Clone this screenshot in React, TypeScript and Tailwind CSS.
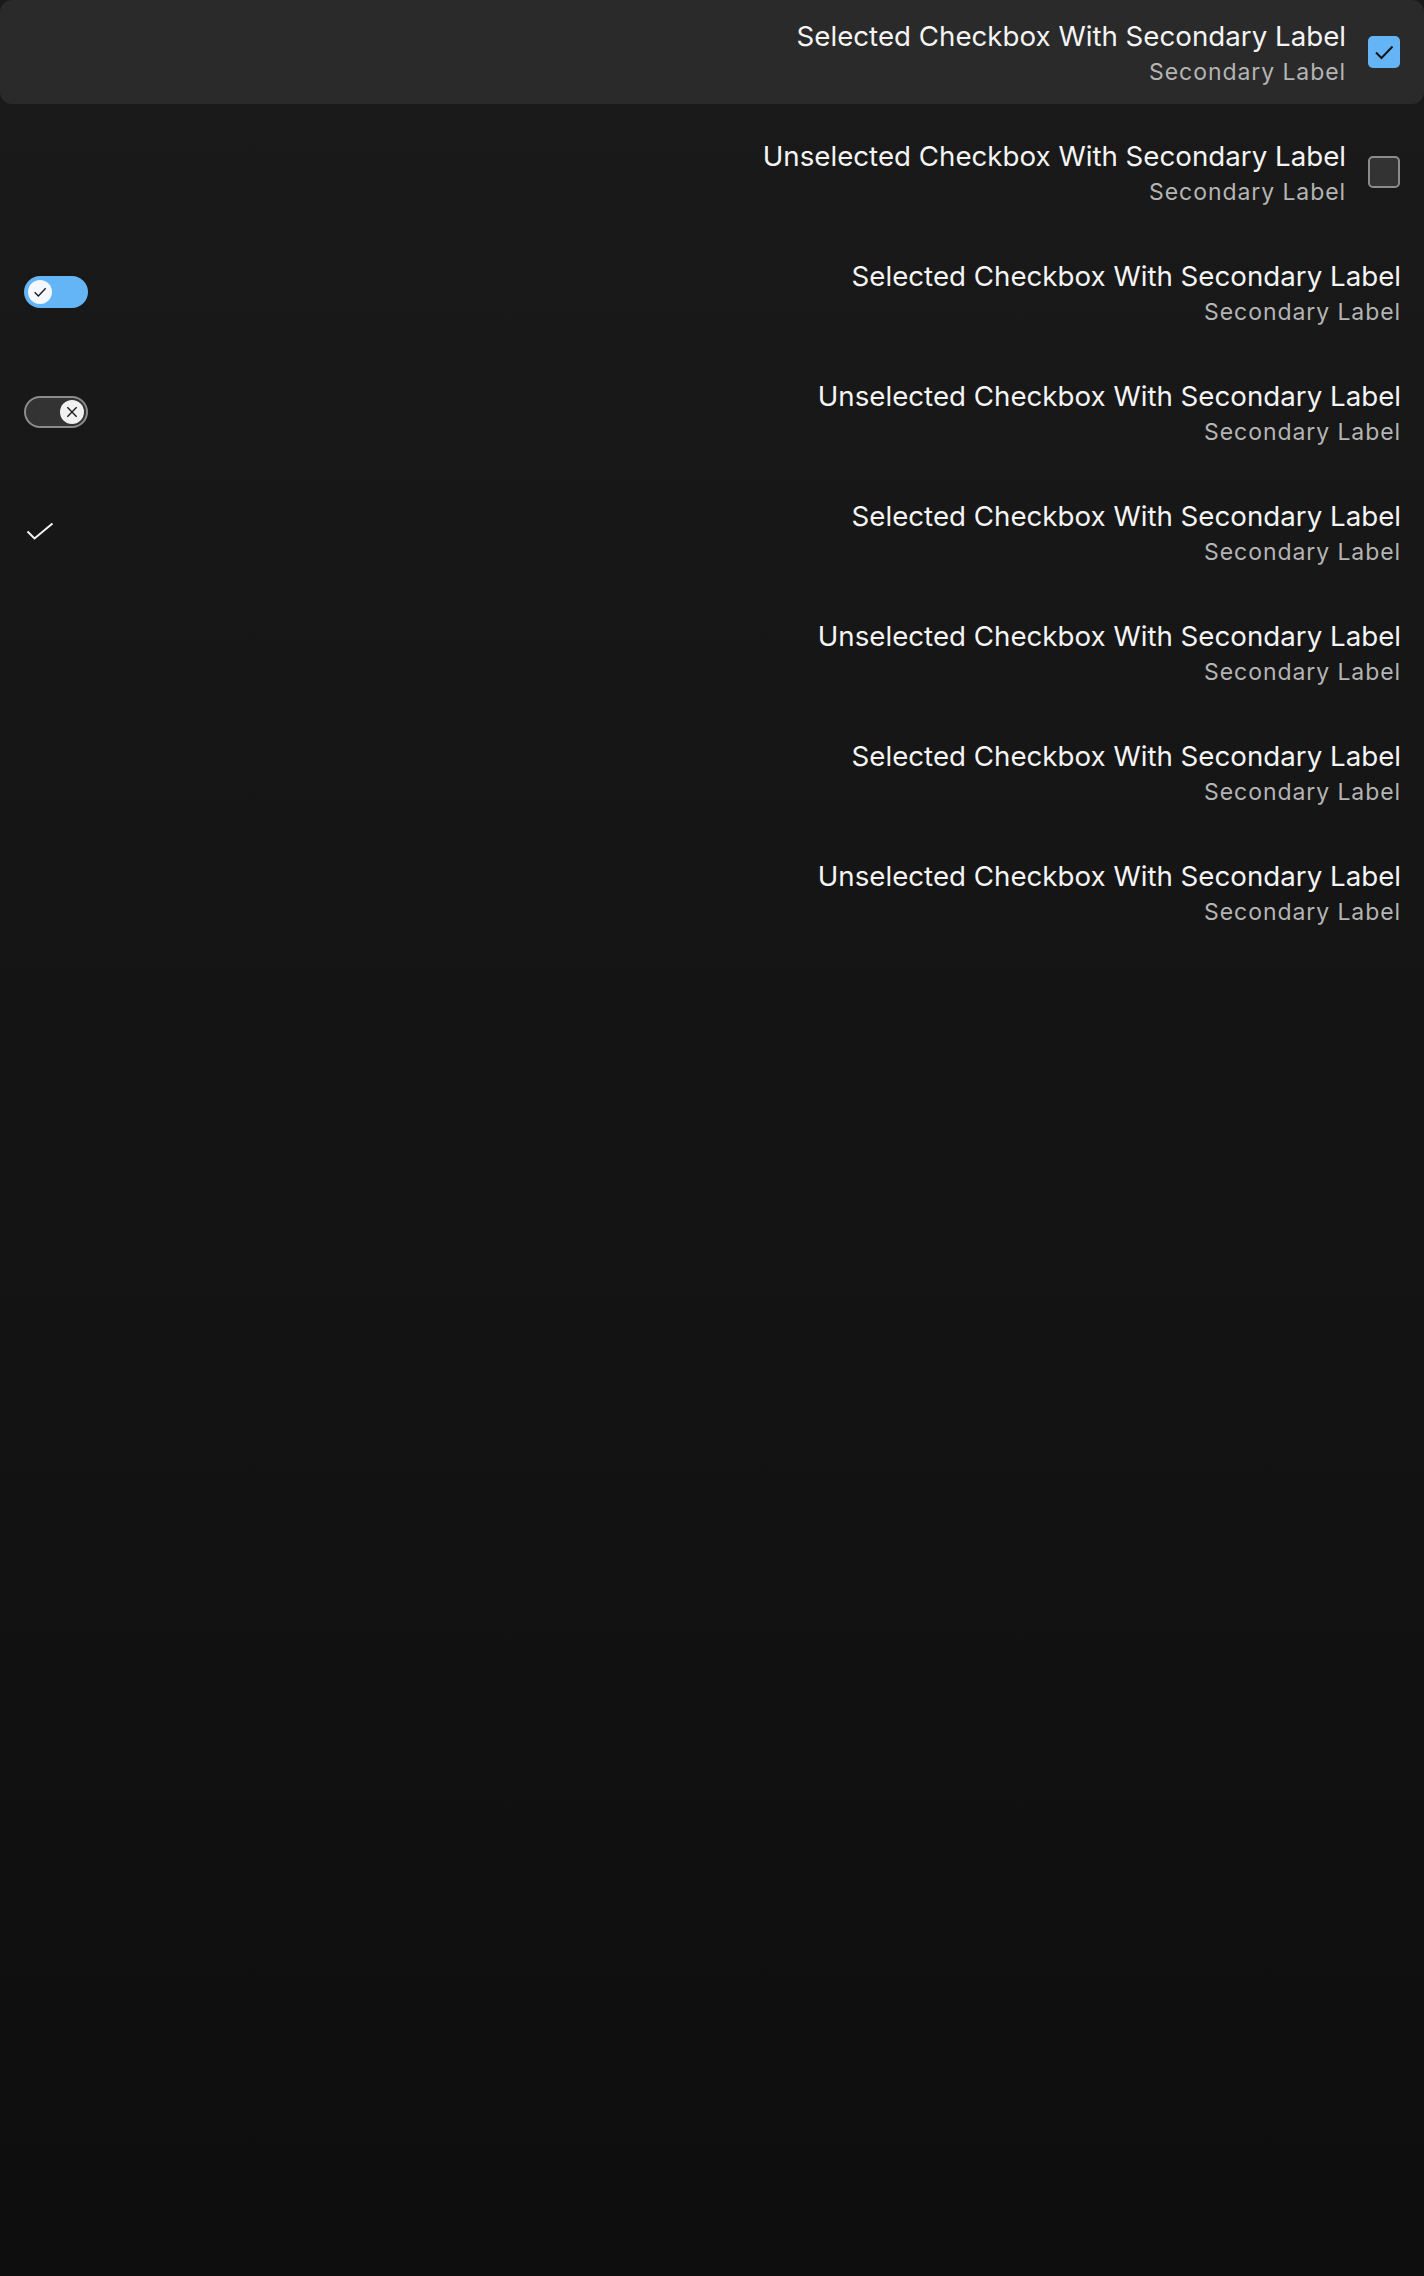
import { ReactNode } from 'react';

type Kind = 'checkbox' | 'switch' | 'check' | 'plain';

interface Row {
  kind: Kind;
  selected: boolean;
}

const rows: Row[] = [
  { kind: 'checkbox', selected: true },
  { kind: 'checkbox', selected: false },
  { kind: 'switch', selected: true },
  { kind: 'switch', selected: false },
  { kind: 'check', selected: true },
  { kind: 'check', selected: false },
  { kind: 'plain', selected: true },
  { kind: 'plain', selected: false },
];

function Labels({ selected }: { selected: boolean }) {
  return (
    <div className="flex flex-col items-end text-right">
      <span className="text-[27.7px] leading-[34px] text-[#f4f4f4]">
        {selected ? 'Selected' : 'Unselected'} Checkbox With Secondary Label
      </span>
      <span className="mt-[5px] text-[23px] leading-[28px] tracking-[0.04em] text-[#b4b4b4]">
        Secondary Label
      </span>
    </div>
  );
}

function Checkbox({ checked }: { checked: boolean }) {
  if (checked) {
    return (
      <div className="flex h-8 w-8 shrink-0 items-center justify-center rounded-[5px] bg-[#64b5f6]">
        <svg viewBox="0 0 24 24" className="h-6 w-6" fill="none" stroke="#161616" strokeWidth={2}>
          <polyline points="4,12.5 9.5,18 20.5,6.5" />
        </svg>
      </div>
    );
  }
  return <div className="h-8 w-8 shrink-0 rounded-[5px] border-2 border-[#8c8c8c] bg-[#333333]" />;
}

function Switch({ on }: { on: boolean }) {
  if (on) {
    return (
      <div className="flex h-8 w-16 items-center rounded-full bg-[#64b5f6] px-1">
        <div className="flex h-6 w-6 items-center justify-center rounded-full bg-[#f4f8fe]">
          <svg viewBox="0 0 24 24" className="h-4 w-4" fill="none" stroke="#1a1a1a" strokeWidth={2}>
            <polyline points="4,12.5 9.5,18 20.5,6.5" />
          </svg>
        </div>
      </div>
    );
  }
  return (
    <div className="flex h-8 w-16 items-center justify-end rounded-full border-2 border-[#8c8c8c] bg-[#333333] px-[2px]">
      <div className="flex h-6 w-6 items-center justify-center rounded-full bg-[#f1f1f1]">
        <svg viewBox="0 0 24 24" className="h-4 w-4" fill="none" stroke="#1a1a1a" strokeWidth={2}>
          <path d="M5 5l14 14M19 5L5 19" />
        </svg>
      </div>
    </div>
  );
}

function Lead({ kind, selected }: Row): ReactNode {
  if (kind === 'switch') return <Switch on={selected} />;
  if (kind === 'check' && selected)
    return (
      <svg viewBox="0 0 28 20" className="ml-[2px] h-5 w-7" fill="none" stroke="#f4f4f4" strokeWidth={2}>
        <polyline points="1.5,9.5 8.5,16.5 26.5,1.5" />
      </svg>
    );
  return <span />;
}

export default function App() {
  return (
    <div
      className="min-h-screen bg-gradient-to-b from-[#1a1a1a] to-[#0e0e0e]"
      style={{ fontFamily: 'Inter, "Noto Sans", sans-serif' }}
    >
      <div className="flex flex-col gap-4">
        {rows.map((row, i) => (
          <div
            key={i}
            className={
              'flex h-[104px] items-center rounded-xl pl-6 ' +
              (row.kind === 'checkbox' ? 'justify-end gap-[22px] pr-6 ' : 'justify-between pr-[23px] ') +
              (i === 0 ? 'bg-[#2a2a2a]' : '')
            }
          >
            {row.kind === 'checkbox' ? (
              <>
                <Labels selected={row.selected} />
                <Checkbox checked={row.selected} />
              </>
            ) : (
              <>
                <Lead {...row} />
                <Labels selected={row.selected} />
              </>
            )}
          </div>
        ))}
      </div>
    </div>
  );
}
